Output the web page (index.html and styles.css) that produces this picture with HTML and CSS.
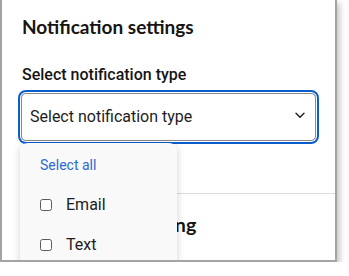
FILE: index.html
```html
<!DOCTYPE html>
<html lang="en">
<head>
<meta charset="utf-8">
<title>Notification settings</title>
<link rel="stylesheet" href="styles.css">
</head>
<body>
<div class="frame">
  <div class="panel">
    <h1 class="title">Notification settings</h1>
    <div class="label">Select notification type</div>
    <div class="select">
      <span class="select-text">Select notification type</span>
      <svg class="chevron" width="10" height="7" viewBox="0 0 10 7"><polyline points="1,1.2 5,5.2 9,1.2" fill="none" stroke="#1d1d1d" stroke-width="1.4" stroke-linecap="round" stroke-linejoin="round"/></svg>
    </div>
    <div class="divider"></div>
    <h2 class="section">Quiet period setting</h2>
  </div>
  <div class="popup">
    <div class="row select-all">Select all</div>
    <div class="row"><span class="box"></span><span class="opt">Email</span></div>
    <div class="row"><span class="box"></span><span class="opt">Text</span></div>
  </div>
</div>
</body>
</html>
```
FILE: styles.css
```css
html, body {
  margin: 0;
  padding: 0;
  background: #ffffff;
}
.frame {
  position: relative;
  width: 333px;
  height: 260px;
  border-left: 2px solid #a4a4a4;
  border-right: 2px solid #a4a4a4;
  border-bottom: 2px solid #a4a4a4;
  background: #ffffff;
  box-shadow: 3px 3px 6px rgba(0, 0, 0, 0.22);
  overflow: hidden;
}
.panel {
  padding: 15px 19px 0 19px;
}
.title {
  margin: 0;
  font-family: Lato, "Noto Sans", sans-serif;
  font-weight: 700;
  font-size: 19px;
  line-height: 24px;
  color: #161513;
  padding-left: 1px;
}
.label {
  margin-top: 26px;
  font-family: Roboto, sans-serif;
  font-weight: 500;
  font-size: 16px;
  line-height: 20px;
  color: #161513;
  padding-left: 1px;
}
.select {
  margin-top: 8px;
  height: 46px;
  border: 1px solid #8a8a8a;
  border-radius: 5px;
  box-shadow: 0 0 0 1px #ffffff, 0 0 0 3px #0b5ccc;
  display: flex;
  align-items: center;
  justify-content: space-between;
  padding: 0 10px 0 8px;
}
.select-text {
  font-family: Roboto, sans-serif;
  font-size: 16px;
  line-height: 20px;
  color: #1d1d1d;
}
.chevron {
  display: block;
  margin-top: -3px;
}
.divider {
  margin-top: 52px;
  margin-right: -19px;
  height: 1px;
  background: #dcdcdc;
}
.section {
  margin: 19px 0 0 0;
  font-family: Lato, "Noto Sans", sans-serif;
  font-weight: 700;
  font-size: 19.7px;
  line-height: 24px;
  color: #161513;
  padding-left: 0;
}
.popup {
  position: absolute;
  left: 18px;
  top: 143px;
  width: 157px;
  height: 160px;
  background: #f9f9f9;
  border-radius: 8px;
  box-shadow: 0 2px 8px rgba(0, 0, 0, 0.18);
  padding-top: 2px;
}
.row {
  height: 40px;
  display: flex;
  align-items: center;
  padding-left: 20px;
}
.select-all {
  font-family: Roboto, sans-serif;
  font-size: 14px;
  line-height: 20px;
  color: #2a6ad0;
}
.box {
  width: 10px;
  height: 10px;
  border: 1.5px solid #5a5a5a;
  border-radius: 2.5px;
  background: #ffffff;
  margin-right: 14px;
}
.opt {
  font-family: Roboto, sans-serif;
  font-size: 16px;
  line-height: 20px;
  color: #1d1d1d;
}
```
